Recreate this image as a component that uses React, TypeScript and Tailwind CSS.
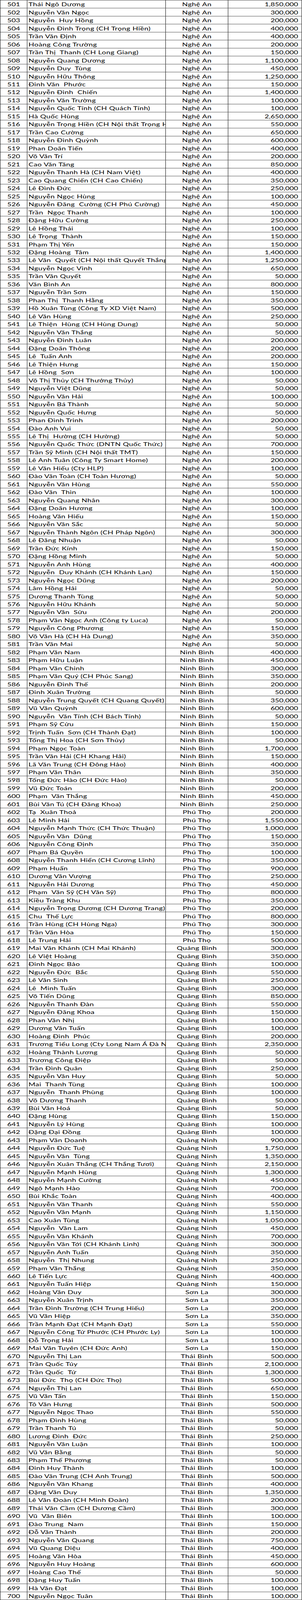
type Row = [name: string, amount: number]

// Donor list, grouped by province in sheet order (numbering starts at 501).
const GROUPS: { province: string; rows: Row[] }[] = [
  {
    province: 'Nghệ An',
    rows: [
      ['Thái Ngô Dương', 1850000],
      ['Nguyễn Văn Ngọc', 300000],
      ['Nguyễn  Huy Hồng', 200000],
      ['Nguyễn Đình Trọng (CH Trọng Hiền)', 400000],
      ['Trần Văn Định', 400000],
      ['Hoàng Công Trường', 200000],
      ['Trần Thị  Thanh (CH Long Giang)', 150000],
      ['Nguyễn Quang Dương', 1100000],
      ['Nguyễn Duy  Tùng', 450000],
      ['Nguyễn Hữu Thông', 1250000],
      ['Đinh Văn  Phước', 150000],
      ['Nguyễn Đình  Chiến', 1400000],
      ['Nguyễn Văn Trường', 100000],
      ['Nguyễn Quốc Tính (CH Quách Tính)', 100000],
      ['Hà Quốc Hùng', 2650000],
      ['Nguyễn Trọng Hiền (CH Nội thất Trọng Hiền)', 550000],
      ['Trần Cao Cường', 650000],
      ['Nguyễn Đình Quỳnh', 600000],
      ['Phan Doãn Tiến', 400000],
      ['Võ Văn Trí', 200000],
      ['Cao Văn Tăng', 850000],
      ['Nguyễn Thanh Hà (CH Nam Việt)', 400000],
      ['Cao Quang Chiến (CH Cao Chiến)', 350000],
      ['Lê Đình Đức', 250000],
      ['Nguyễn Ngọc Hùng', 100000],
      ['Nguyễn Đăng  Cường (CH Phú Cường)', 450000],
      ['Trần  Ngọc Thanh', 100000],
      ['Đặng Hữu Cường', 250000],
      ['Lê Hồng Thái', 100000],
      ['Lê Trọng  Thành', 150000],
      ['Phạm Thị Yến', 150000],
      ['Đặng Hoàng  Tâm', 1400000],
      ['Lê Văn  Quyết (CH Nội thất Quyết Thắng)', 1250000],
      ['Nguyễn Ngọc Vinh', 650000],
      ['Trần Văn Quyết', 50000],
      ['Văn Bình An', 800000],
      ['Nguyễn Trần Sơn', 150000],
      ['Phan Thị  Thanh Hằng', 350000],
      ['Hồ Xuân Tùng (Công Ty XD Việt Nam)', 500000],
      ['Lê Văn Hùng', 250000],
      ['Lê Thiện  Hùng (CH Hùng Dung)', 50000],
      ['Nguyễn Văn Thắng', 50000],
      ['Nguyễn Đình Luân', 200000],
      ['Đặng Doãn Thông', 200000],
      ['Lê  Tuấn Anh', 200000],
      ['Lê Thiện Hưng', 150000],
      ['Lê Hồng  Sơn', 100000],
      ['Võ Thị Thủy (CH Thưởng Thủy)', 50000],
      ['Nguyễn Việt Dũng', 50000],
      ['Nguyễn Văn Hải', 100000],
      ['Nguyễn Bá Thành', 50000],
      ['Nguyễn Quốc Hưng', 50000],
      ['Phan Đình Trinh', 200000],
      ['Đào Anh Vui', 50000],
      ['Lê Thị  Hường (CH Hường)', 50000],
      ['Nguyễn Quốc Thức (DNTN Quốc Thức)', 700000],
      ['Trần Sỹ Minh (CH Nội thất TMT)', 150000],
      ['Lê Anh Tuân (Công Ty Smart Home)', 200000],
      ['Lê Văn Hiếu (Cty HLP)', 100000],
      ['Đào Văn Toàn (CH Toàn Hương)', 50000],
      ['Nguyễn Văn Hùng', 550000],
      ['Đào Văn  Thìn', 100000],
      ['Nguyễn Quang Nhân', 300000],
      ['Đặng Doãn Hương', 100000],
      ['Hoàng Văn Hiếu', 150000],
      ['Nguyễn Văn Sắc', 50000],
      ['Nguyễn Thành Ngôn (CH Pháp Ngôn)', 300000],
      ['Lê Đăng Nhuận', 50000],
      ['Trần Đức Kính', 150000],
      ['Đặng Hồng Minh', 50000],
      ['Nguyễn Anh Hùng', 400000],
      ['Nguyễn  Duy Khánh (CH Khánh Lan)', 150000],
      ['Nguyễn Ngọc Dũng', 200000],
      ['Lâm Hồng Hải', 50000],
      ['Dương Thanh Tùng', 50000],
      ['Nguyễn Hữu Khánh', 50000],
      ['Nguyễn Văn  Sửu', 200000],
      ['Phạm Văn Ngọc Anh (Công ty Luca)', 50000],
      ['Nguyễn Công Phương', 150000],
      ['Võ Văn Hà (CH Hà Dung)', 350000],
      ['Trần Văn Mai', 50000],
    ],
  },
  {
    province: 'Ninh Bình',
    rows: [
      ['Phạm Văn Nam', 400000],
      ['Phạm Hữu Luận', 450000],
      ['Phạm Văn Chinh', 300000],
      ['Phạm Văn Quý (CH Phúc Sang)', 350000],
      ['Nguyễn Đình Thế', 200000],
      ['Đinh Xuân Trường', 50000],
      ['Nguyễn Trung Quyết (CH Quang Quyết)', 350000],
      ['Vũ Văn Quỳnh', 600000],
      ['Nguyễn  Văn Tính (CH Bách Tính)', 50000],
      ['Phạm Sỹ Cửu', 150000],
      ['Trịnh Tuấn  Sơn (CH Thành Đạt)', 100000],
      ['Tống Thị Hoa (CH Sơn Thủy)', 50000],
      ['Phạm Ngọc Toàn', 1700000],
      ['Trần Văn Hải (CH Khang Hải)', 150000],
      ['Lã Văn Trung (CH Đông Hảo)', 400000],
      ['Phạm Văn Thân', 350000],
      ['Tống Đức Hào (CH Đức Hào)', 50000],
      ['Vũ Đức Toán', 200000],
      ['Phạm  Văn Thắng', 450000],
      ['Bùi Văn Tú (CH Đăng Khoa)', 250000],
    ],
  },
  {
    province: 'Phú Thọ',
    rows: [
      ['Tạ  Xuân Thoả', 200000],
      ['Lê Minh Hải', 1550000],
      ['Nguyễn Mạnh Thức (CH Thức Thuận)', 1000000],
      ['Nguyễn Văn  Dũng', 150000],
      ['Nguyễn Công Định', 350000],
      ['Phạm Bá Quyền', 100000],
      ['Nguyễn Thanh Hiển (CH Cương Lĩnh)', 350000],
      ['Phạm Huấn', 900000],
      ['Dương Văn Vượng', 250000],
      ['Nguyễn Hải Dương', 450000],
      ['Phạm  Văn Sỹ (CH Văn Sỹ)', 800000],
      ['Kiều Tràng Khu', 350000],
      ['Nguyễn Trọng Dương (CH Dương Trang)', 200000],
      ['Chu  Thế Lực', 800000],
      ['Trần Hùng (CH Hùng Nga)', 300000],
      ['Trần Văn Hòa', 150000],
      ['Lê Trung Hải', 500000],
    ],
  },
  {
    province: 'Quảng Bình',
    rows: [
      ['Mai Văn Khánh (CH Mai Khánh)', 300000],
      ['Lê Việt Hoàng', 350000],
      ['Đinh Ngọc Bảo', 100000],
      ['Nguyễn Đức  Bắc', 550000],
      ['Lê Văn Sinh', 250000],
      ['Lê  Minh Tuấn', 300000],
      ['Võ Tiến Dũng', 850000],
      ['Nguyễn Thanh Đàn', 550000],
      ['Nguyễn Đăng Khoa', 150000],
      ['Phan Văn Nhị', 100000],
      ['Dương Văn Tuấn', 100000],
      ['Hoàng Đình  Phúc', 200000],
      ['Trương Tiểu Long (Cty Long Nam Á Đà Nẵng)', 2350000],
      ['Hoàng Thành Lương', 50000],
      ['Trương Công Điệp', 50000],
      ['Trần Đình Quân', 250000],
      ['Nguyễn Văn Huy', 50000],
      ['Mai  Thanh Tùng', 100000],
      ['Nguyễn  Thanh Phùng', 100000],
      ['Võ Dương Thanh', 50000],
      ['Bùi Văn Hoá', 50000],
      ['Đặng Hùng', 150000],
      ['Nguyễn Lý Hùng', 100000],
      ['Đặng Đại Đồng', 100000],
    ],
  },
  {
    province: 'Quảng Ninh',
    rows: [
      ['Phạm Văn Doanh', 900000],
      ['Nguyễn Đức Tuệ', 1750000],
      ['Nguyễn Văn  Tùng', 1350000],
      ['Nguyễn Xuân Thắng (CH Thắng Tươi)', 2150000],
      ['Nguyễn Mạnh Hùng', 1300000],
      ['Nguyễn Mạnh Cường', 450000],
      ['Ngô Mạnh Hào', 700000],
      ['Bùi Khắc Toàn', 400000],
      ['Nguyễn Văn Thanh', 550000],
      ['Nguyễn Văn Mạnh', 1150000],
      ['Cao Xuân Tùng', 1050000],
      ['Nguyễn  Văn Lam', 450000],
      ['Nguyễn Văn Khánh', 700000],
      ['Nguyễn Văn Tới (CH Khánh Linh)', 300000],
      ['Nguyễn Anh Tuấn', 350000],
      ['Nguyễn  Thị Nhung', 250000],
      ['Phạm Văn Thắng', 350000],
      ['Lê Tiến Lực', 400000],
      ['Nguyễn Tuấn Hiệp', 150000],
    ],
  },
  {
    province: 'Sơn La',
    rows: [
      ['Hoàng Văn Duy', 300000],
      ['Nguyễn Xuân Trịnh', 350000],
      ['Trần Đình Trường (CH Trung Hiếu)', 200000],
      ['Vũ Văn Hiệp', 350000],
      ['Trần Mạnh Đạt (CH Mạnh Đạt)', 550000],
      ['Nguyễn Công Tứ Phước (CH Phước Ly)', 100000],
      ['Đỗ Trọng Hải', 100000],
      ['Mai Văn Tuyên (CH Đức Anh)', 150000],
    ],
  },
  {
    province: 'Thái Bình',
    rows: [
      ['Nguyễn Thị Lan', 500000],
      ['Trần Quốc Túy', 2100000],
      ['Trần Quốc  Tứ', 1300000],
      ['Bùi Đức  Thọ (CH Đức Thọ)', 500000],
      ['Nguyễn Thị Lan', 650000],
      ['Vũ Văn Tấn', 150000],
      ['Tô Văn Hưng', 500000],
      ['Nguyễn Ngọc Thao', 550000],
      ['Phạm Đình Hùng', 50000],
      ['Trần Thanh Tú', 50000],
      ['Lương Đình  Đức', 250000],
      ['Nguyễn Văn Luận', 100000],
      ['Vũ Văn Bằng', 50000],
      ['Phạm Thế Phương', 50000],
      ['Đinh Huy Thành', 100000],
      ['Đào Văn Trung (CH Anh Trung)', 500000],
      ['Nguyễn Văn Khang', 400000],
      ['Đặng Văn Duy', 1350000],
      ['Lê Văn Đoàn (CH Minh Đoàn)', 200000],
      ['Thái Văn Cầm (CH Dương Cầm)', 300000],
      ['Vũ  Văn Biên', 100000],
      ['Đào Trung  Nam', 150000],
      ['Đỗ Văn Thành', 200000],
      ['Nguyễn Văn Quang', 750000],
      ['Vũ Quang Diệu', 400000],
      ['Hoàng Văn Hòa', 450000],
      ['Nguyễn Huy Hoàng', 600000],
      ['Hoàng Cao Thế', 50000],
      ['Đặng Huy Tuấn', 100000],
      ['Hà Văn Đạt', 100000],
      ['Nguyễn Ngọc Tuân', 100000],
    ],
  },
]

const FIRST_NO = 501

const cell = 'h-full border-r border-black pt-[1px] leading-[27px]'

export default function App() {
  const rows = GROUPS.flatMap((g) => g.rows.map(([name, amount]) => ({ province: g.province, name, amount })))

  return (
    <div className="h-[4096px] w-[774px] overflow-hidden bg-white">
      <div
        className="origin-top scale-y-[0.70609] border-t border-l border-black text-[19px] text-black"
        style={{ fontFamily: 'Lato, "Noto Sans", sans-serif' }}
      >
        {rows.map((row, i) => (
          <div
            key={i}
            className="grid h-[29px] grid-cols-[69px_355px_160px_189px] border-b border-black"
          >
            <div className={`${cell} text-center`}>{FIRST_NO + i}</div>
            <div className={`${cell} overflow-hidden pl-[3px] tracking-[0.45px] whitespace-pre`}>{row.name}</div>
            <div className={`${cell} text-center tracking-[0.45px]`}>{row.province}</div>
            <div className={`${cell} pr-[9px] text-right`}>{row.amount.toLocaleString('en-US')}</div>
          </div>
        ))}
      </div>
    </div>
  )
}
